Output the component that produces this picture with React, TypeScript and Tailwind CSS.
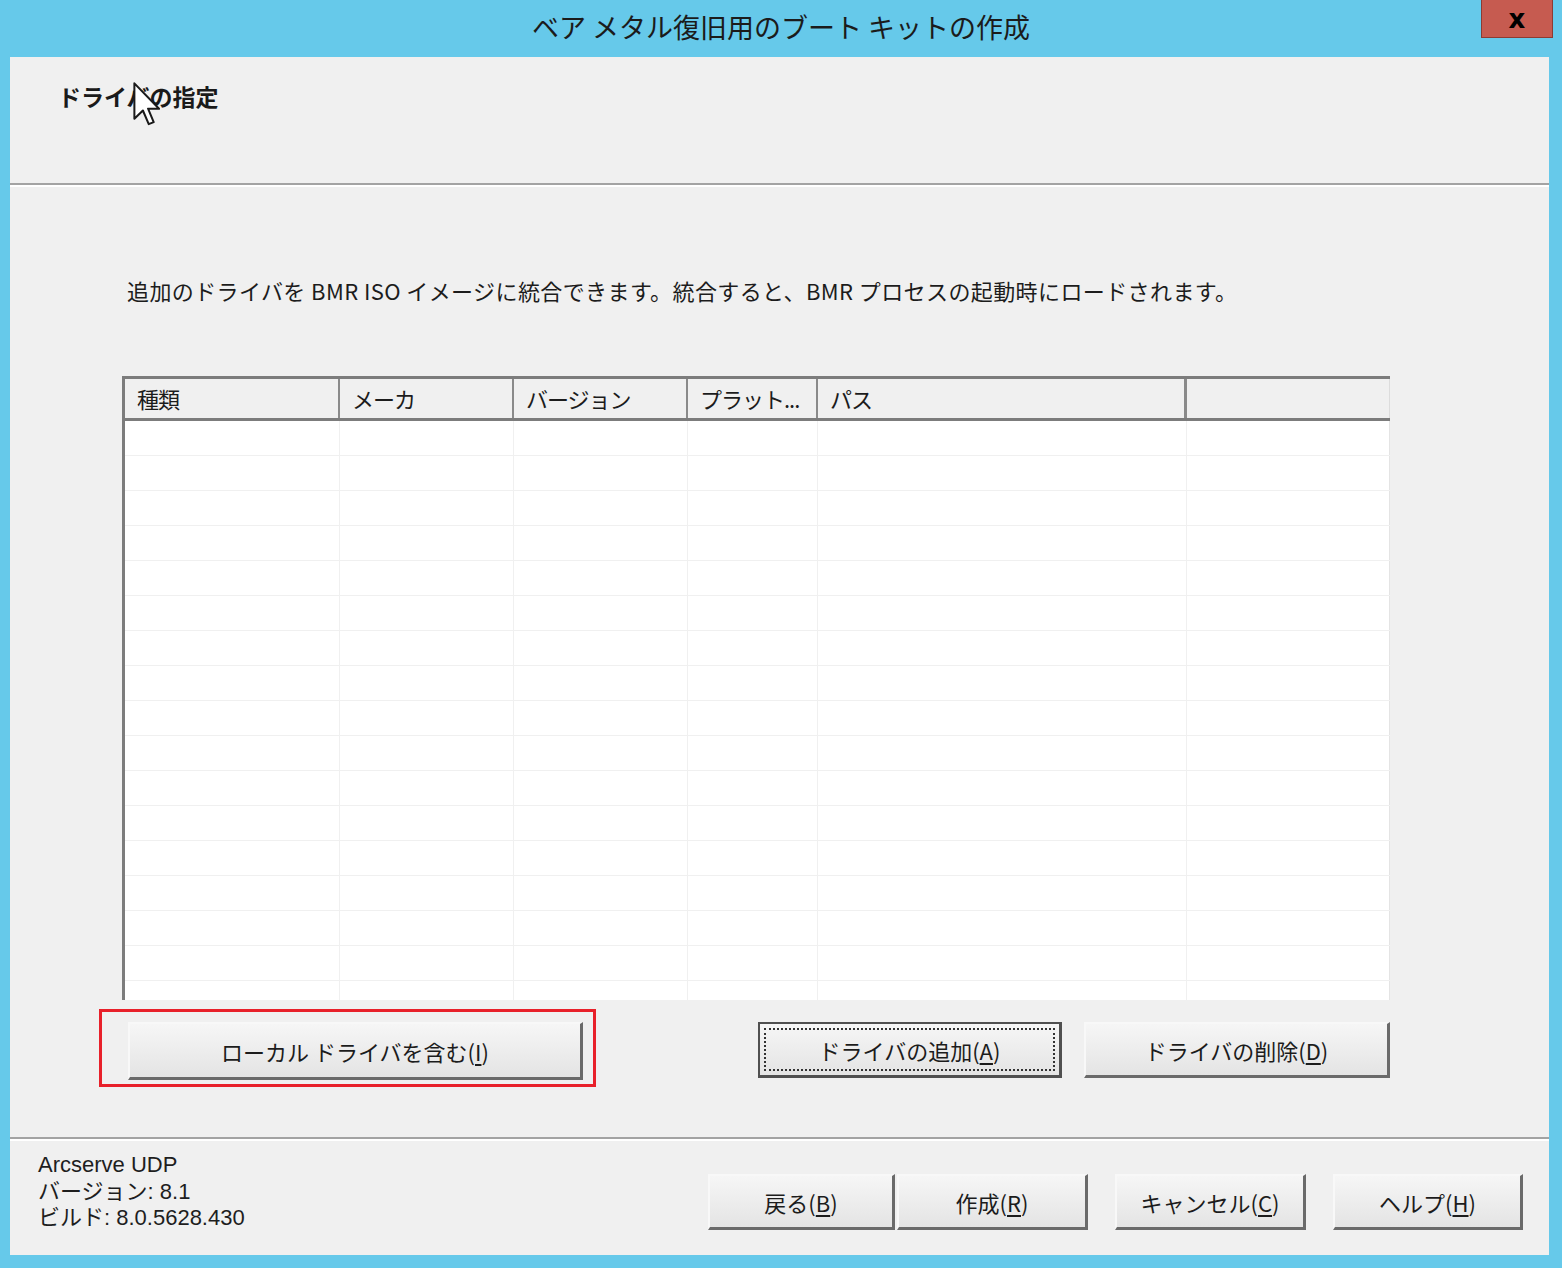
import React from "react";

const JP = { fontFamily: '"Noto Sans CJK JP", "Noto Sans", sans-serif' };
const FOOT = { fontFamily: '"Liberation Sans", "Noto Sans CJK JP", sans-serif' };

function WinButton({
  children,
  className = "",
  isDefault = false,
}: {
  children: React.ReactNode;
  className?: string;
  isDefault?: boolean;
}) {
  if (isDefault) {
    return (
      <div
        className={`flex border-2 border-[#505050] border-r-[3px] border-b-[3px] bg-linear-to-b from-[#f6f6f6] to-[#e4e4e4] p-[4px] ${className}`}
      >
        <div className="flex flex-1 items-center justify-center border-2 border-dotted border-[#333]">
          {children}
        </div>
      </div>
    );
  }
  return (
    <div
      className={`flex items-center justify-center border-t-2 border-l-2 border-t-[#f8f8f8] border-l-[#f8f8f8] border-r-[3px] border-b-[3px] border-r-[#6a6a6a] border-b-[#6a6a6a] bg-linear-to-b from-[#f6f6f6] to-[#e4e4e4] ${className}`}
    >
      {children}
    </div>
  );
}

function Label({ text, k }: { text: string; k: string }) {
  return (
    <span className="whitespace-nowrap text-[22px] leading-none text-[#1c1c1c]" style={JP}>
      {text}(<u className="underline-offset-[3px]">{k}</u>)
    </span>
  );
}

const cols = [215, 174, 174, 130, 369, 203];
const headers = ["種類", "メーカ", "バージョン", "プラット...", "パス", ""];

export default function App() {
  const rows = Array.from({ length: 17 });
  return (
    <div className="relative flex h-[1268px] w-[1562px] flex-col overflow-hidden bg-[#66c9ea]" style={JP}>
      {/* Title bar */}
      <div className="relative flex h-[57px] shrink-0 items-center justify-center">
        <span className="-mt-[3px] text-[27px] text-[#1b1b1b]" style={JP}>
          ベア メタル復旧用のブート キットの作成
        </span>
        <div className="absolute right-[9px] top-0 flex h-[38px] w-[72px] items-center justify-center border border-t-0 border-[#8c3b33] bg-[#c65b50]">
          <span className="text-[26px] font-bold leading-none text-black" style={{ fontFamily: '"DejaVu Sans", sans-serif' }}>
            x
          </span>
        </div>
      </div>

      {/* Content */}
      <div className="ml-[10px] mr-[13px] mb-[13px] flex flex-1 flex-col bg-[#f0f0f0]">
        {/* Header */}
        <div className="relative h-[126px] shrink-0 pl-[48px] pt-[24px]">
          <span className="text-[23px] font-bold leading-[30px] text-[#1a1a1a]" style={JP}>
            ドライバの指定
          </span>
          {/* mouse cursor */}
          <svg
            className="absolute left-[123px] top-[25px]"
            width="27"
            height="46"
            viewBox="0 0 12 20.5"
          >
            <path
              d="M0.6 0.6 L0.6 16.4 L4.4 12.7 L7 18.8 L9.2 17.9 L6.7 11.9 L11.6 11.9 Z"
              fill="white"
              stroke="#1a1a1a"
              strokeWidth="0.9"
              strokeLinejoin="round"
            />
          </svg>
        </div>
        <div className="h-[4px] shrink-0 border-t-2 border-[#a3a3a3] bg-white" />

        {/* Body */}
        <div className="flex shrink-0 flex-col">
          <p className="mt-[91px] pl-[117px] text-[22px] leading-[24px] tracking-[0.4px] text-[#1c1c1c]" style={JP}>
            追加のドライバを BMR ISO イメージに統合できます。統合すると、BMR プロセスの起動時にロードされます。
          </p>

          {/* Table */}
          <div className="ml-[112px] mt-[74px] flex h-[624px] w-[1268px] flex-col overflow-hidden border-t-[3px] border-l-[3px] border-[#7c7c7c] bg-white">
            <div className="flex h-[42px] shrink-0 border-b-[3px] border-[#7c7c7c] bg-[#f0f0f0]">
              {headers.map((h, i) => (
                <div
                  key={i}
                  className={`flex h-full items-center overflow-hidden whitespace-nowrap px-[12px] text-[22px] tracking-[-1px] text-[#1c1c1c] ${
                    i < 4 ? "border-r-2 border-[#8a8a8a]" : i === 4 ? "border-r-[3px] border-[#8a8a8a]" : "border-r border-[#dcdcdc]"
                  }`}
                  style={{ width: cols[i], ...JP }}
                >
                  {h}
                </div>
              ))}
            </div>
            {rows.map((_, r) => (
              <div key={r} className="flex h-[35px] shrink-0 border-b border-[#f0f0f0]">
                {cols.map((w, i) => (
                  <div
                    key={i}
                    className={`h-full ${i < 5 ? "border-r border-[#f0f0f0]" : "border-r border-[#e4e4e4]"}`}
                    style={{ width: w }}
                  />
                ))}
              </div>
            ))}
          </div>

          {/* Buttons row */}
          <div className="mt-[9px] flex items-start">
            <div className="ml-[89px] h-[78px] w-[497px] border-[3px] border-[#e8202a] pl-[26px] pt-[10px]">
              <WinButton className="h-[58px] w-[455px]">
                <Label text="ローカル ドライバを含む" k="I" />
              </WinButton>
            </div>
            <WinButton isDefault className="ml-[162px] mt-[13px] h-[56px] w-[304px]">
              <Label text="ドライバの追加" k="A" />
            </WinButton>
            <WinButton className="ml-[22px] mt-[13px] h-[56px] w-[306px]">
              <Label text="ドライバの削除" k="D" />
            </WinButton>
          </div>
        </div>

        {/* Footer separator */}
        <div className="mt-[50px] h-[4px] shrink-0 border-t-2 border-[#a3a3a3] bg-white" />

        {/* Footer */}
        <div className="flex flex-1 items-start justify-between">
          <div className="pl-[28px] pt-[11px] text-[22px] leading-[26.5px] text-[#1e1e1e]" style={FOOT}>
            <div>Arcserve UDP</div>
            <div>バージョン: 8.1</div>
            <div>ビルド: 8.0.5628.430</div>
          </div>
          <div className="mr-[26px] mt-[33px] flex items-start">
            <WinButton className="h-[56px] w-[187px]">
              <Label text="戻る" k="B" />
            </WinButton>
            <WinButton className="ml-[2px] h-[56px] w-[191px]">
              <Label text="作成" k="R" />
            </WinButton>
            <WinButton className="ml-[27px] h-[56px] w-[191px]">
              <Label text="キャンセル" k="C" />
            </WinButton>
            <WinButton className="ml-[27px] h-[56px] w-[190px]">
              <Label text="ヘルプ" k="H" />
            </WinButton>
          </div>
        </div>
      </div>
    </div>
  );
}
